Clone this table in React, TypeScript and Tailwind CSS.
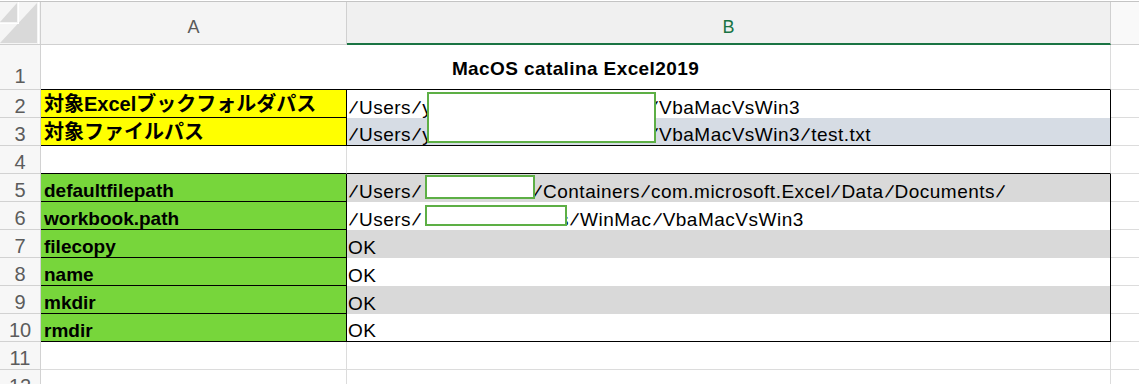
import { Fragment, type ReactNode } from 'react';

const Path = ({ t }: { t: string }) => (
  <>
    {t.split('/').map((p, i) => (
      <Fragment key={i}>
        {i > 0 && <span className="inline-block w-[11px] rotate-[17deg] text-center tracking-normal">/</span>}
        {p}
      </Fragment>
    ))}
  </>
);

function RowNum({ n, extra = '' }: { n: number; extra?: string }) {
  return (
    <div
      className={`flex w-[41px] shrink-0 items-end justify-center border-r border-b border-[#d2d2d2] bg-[#f7f7f7] text-[20px] leading-[21px] text-[#5c5c5c] ${extra}`}
    >
      {n}
    </div>
  );
}

function Row({ n, tall = false, children }: { n: number; tall?: boolean; children: ReactNode }) {
  return (
    <div className={tall ? 'flex h-[45px]' : 'flex h-[28px]'}>
      <RowNum n={n} extra={tall ? 'pb-[2px]' : ''} />
      {children}
      <div className="flex-1 border-b border-[#dcdcdc]" />
    </div>
  );
}

const A_BASE =
  'flex w-[306px] shrink-0 items-end pl-[3px] text-[19px] leading-[21px] font-bold whitespace-nowrap text-black';
const B_BASE =
  'flex w-[764px] shrink-0 items-end pl-[1px] text-[19px] leading-[21px] tracking-[0.5px] whitespace-nowrap text-black';

const GREEN = 'bg-[#77d63b]';

export default function App() {
  return (
    <div className="relative h-[384px] w-[1139px] overflow-hidden bg-white pt-px font-['Liberation_Sans','Noto_Sans_CJK_JP',sans-serif]">
      {/* column header */}
      <div className="flex h-[44px] border-t border-[#c4c4c4]">
        <div className="w-[41px] shrink-0 border-r border-b border-[#cfcfcf] bg-[#f5f5f5]">
          <svg width="40" height="42" viewBox="0 0 40 42">
            <polygon points="0,41 37,1 37,41" fill="#d9d9d9" />
            <polygon points="0,20 17,1 17,20" fill="#d9d9d9" />
            <line x1="18.5" y1="0" x2="18.5" y2="21.5" stroke="#ffffff" strokeWidth="1" />
            <line x1="0" y1="21.5" x2="19" y2="21.5" stroke="#ffffff" strokeWidth="1" />
            <line x1="38.5" y1="0" x2="38.5" y2="42" stroke="#ffffff" strokeWidth="1" />
          </svg>
        </div>
        <div className="flex w-[306px] shrink-0 items-end justify-center border-r border-b border-[#d0d0d0] bg-[#f4f4f4] pb-[6px] text-[18px] leading-[21px] text-[#5a5a5a]">
          A
        </div>
        <div className="flex w-[764px] shrink-0 items-end justify-center border-r border-b-2 border-r-[#d0d0d0] border-b-[#1a7443] bg-[#f0f0f0] pb-[5px] text-[18px] leading-[21px] text-[#1a7443]">
          B
        </div>
        <div className="flex-1 border-b border-[#d0d0d0] bg-[#f9f9f9]" />
      </div>

      {/* row 1: merged title */}
      <Row n={1} tall>
        <div className="flex w-[1070px] shrink-0 items-center justify-center border-r border-b border-r-[#dcdcdc] border-b-black pt-[3px] text-[19px] leading-[21px] font-bold tracking-[0.4px] text-black">
          MacOS catalina Excel2019
        </div>
      </Row>

      {/* row 2 */}
      <Row n={2}>
        <div className={`${A_BASE} border-r border-b border-black bg-[#ffff00] pb-[2px] text-[20px]`}>
          対象Excelブックフォルダパス
        </div>
        <div className={`${B_BASE} border-r border-black bg-white`}>
          <span className="inline-block w-[300px] overflow-hidden">
            <Path t="/Users/y" />
          </span>
          <Path t="/VbaMacVsWin3" />
        </div>
      </Row>

      {/* row 3 */}
      <Row n={3}>
        <div className={`${A_BASE} border-r border-b border-black bg-[#ffff00] pb-[2px] text-[20px]`}>
          対象ファイルパス
        </div>
        <div className={`${B_BASE} border-r border-b border-black bg-[#d6dce4]`}>
          <span className="inline-block w-[300px] overflow-hidden">
            <Path t="/Users/y" />
          </span>
          <Path t="/VbaMacVsWin3/test.txt" />
        </div>
      </Row>

      {/* row 4 */}
      <Row n={4}>
        <div className={`${A_BASE} border-r border-b border-r-[#dcdcdc] border-b-black`} />
        <div className={`${B_BASE} border-r border-b border-r-[#dcdcdc] border-b-black`} />
      </Row>

      {/* row 5 */}
      <Row n={5}>
        <div className={`${A_BASE} border-r border-b border-black ${GREEN}`}>defaultfilepath</div>
        <div className={`${B_BASE} border-r border-black bg-[#d9d9d9]`}>
          <span className="inline-block w-[184px] overflow-hidden">
            <Path t="/Users/" />
          </span>
          <Path t="/Containers/com.microsoft.Excel/Data/Documents/" />
        </div>
      </Row>

      {/* row 6 */}
      <Row n={6}>
        <div className={`${A_BASE} border-r border-b border-black ${GREEN}`}>workbook.path</div>
        <div className={`${B_BASE} border-r border-black bg-white`}>
          <span className="inline-block w-[211px] overflow-hidden">
            <Path t="/Users/" />
          </span>
          <Path t="s/WinMac/VbaMacVsWin3" />
        </div>
      </Row>

      {/* row 7 */}
      <Row n={7}>
        <div className={`${A_BASE} border-r border-b border-black ${GREEN}`}>filecopy</div>
        <div className={`${B_BASE} border-r border-black bg-[#d9d9d9]`}>OK</div>
      </Row>

      {/* row 8 */}
      <Row n={8}>
        <div className={`${A_BASE} border-r border-b border-black ${GREEN}`}>name</div>
        <div className={`${B_BASE} border-r border-black bg-white`}>OK</div>
      </Row>

      {/* row 9 */}
      <Row n={9}>
        <div className={`${A_BASE} border-r border-b border-black ${GREEN}`}>mkdir</div>
        <div className={`${B_BASE} border-r border-black bg-[#d9d9d9]`}>OK</div>
      </Row>

      {/* row 10 */}
      <Row n={10}>
        <div className={`${A_BASE} border-r border-b border-black ${GREEN}`}>rmdir</div>
        <div className={`${B_BASE} border-r border-b border-black bg-white`}>OK</div>
      </Row>

      {/* row 11 */}
      <Row n={11}>
        <div className={`${A_BASE} border-r border-b border-[#dcdcdc]`} />
        <div className={`${B_BASE} border-r border-b border-[#dcdcdc]`} />
      </Row>

      {/* row 12 */}
      <Row n={12}>
        <div className={`${A_BASE} border-r border-b border-[#dcdcdc]`} />
        <div className={`${B_BASE} border-r border-b border-[#dcdcdc]`} />
      </Row>

      {/* redaction boxes laid over the cells */}
      <div className="absolute left-[427px] top-[92px] h-[51px] w-[229px] border-2 border-[#5daf45] bg-white" />
      <div className="absolute left-[425px] top-[175px] h-[24px] w-[110px] border-2 border-[#5daf45] bg-white" />
      <div className="absolute left-[425px] top-[205px] h-[21px] w-[142px] border-2 border-[#5daf45] bg-white" />
    </div>
  );
}
